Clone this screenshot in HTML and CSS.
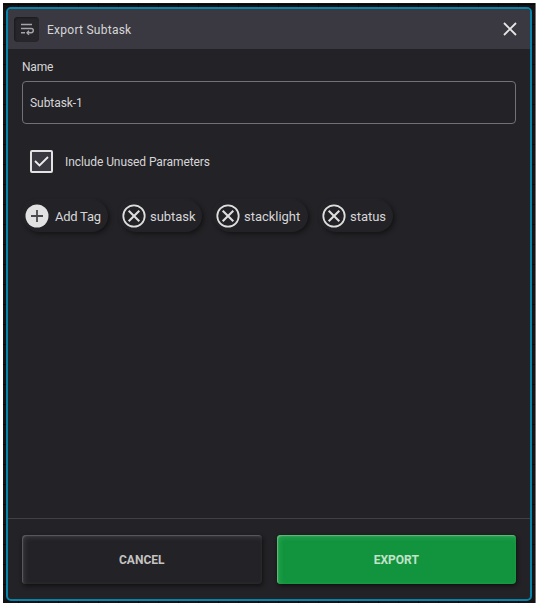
FILE: index.html
```html
<!DOCTYPE html>
<html lang="en">
<head>
<meta charset="utf-8">
<title>Export Subtask</title>
<link rel="stylesheet" href="styles.css">
</head>
<body>
<div class="backdrop">
  <section class="dialog">
    <header class="header">
      <span class="header-icon">
        <svg width="14" height="14" viewBox="0 0 14 14" fill="none" stroke="#a5a5a9" stroke-width="1.4"><path d="M1 2.5h11M1 6.5h10.2a2.1 2.1 0 0 1 0 4.2H7M1 10.7h4"/><path d="M9 8.7 7 10.7l2 2"/></svg>
      </span>
      <span class="title">Export Subtask</span>
      <svg class="close" width="14" height="14" viewBox="0 0 14 14" stroke="#e6e6e6" stroke-width="1.8"><path d="M1 1l12 12M13 1 1 13"/></svg>
    </header>
    <main class="content">
      <div class="label">Name</div>
      <div class="field"><span class="value">Subtask-1</span></div>
      <div class="check-row">
        <span class="checkbox"><svg width="15" height="11" viewBox="0 0 15 11" fill="none" stroke="#ededed" stroke-width="1.8"><path d="M1 5l4.5 4.5L14 1"/></svg></span>
        <span class="check-label">Include Unused Parameters</span>
      </div>
      <div class="tags">
        <span class="tag add"><svg width="24" height="24" viewBox="0 0 24 24"><circle cx="12" cy="12" r="11.5" fill="#e2e2e2"/><path d="M12 6v12M6 12h12" stroke="#4a4a4e" stroke-width="1.8"/></svg><span class="tag-text add-text">Add Tag</span></span>
        <span class="tag subtask"><svg width="24" height="24" viewBox="0 0 24 24" fill="none" stroke="#dedede"><circle cx="12" cy="12" r="10.7" stroke-width="1.8"/><path d="M6.7 6.7l10.6 10.6M17.3 6.7 6.7 17.3" stroke-width="2.1"/></svg><span class="tag-text">subtask</span></span>
        <span class="tag stacklight"><svg width="24" height="24" viewBox="0 0 24 24" fill="none" stroke="#dedede"><circle cx="12" cy="12" r="10.7" stroke-width="1.8"/><path d="M6.7 6.7l10.6 10.6M17.3 6.7 6.7 17.3" stroke-width="2.1"/></svg><span class="tag-text">stacklight</span></span>
        <span class="tag status"><svg width="24" height="24" viewBox="0 0 24 24" fill="none" stroke="#dedede"><circle cx="12" cy="12" r="10.7" stroke-width="1.8"/><path d="M6.7 6.7l10.6 10.6M17.3 6.7 6.7 17.3" stroke-width="2.1"/></svg><span class="tag-text">status</span></span>
      </div>
    </main>
    <footer class="footer">
      <div class="button cancel">CANCEL</div>
      <div class="button export">EXPORT</div>
    </footer>
  </section>
</div>
</body>
</html>
```
FILE: styles.css
```css
* { box-sizing: border-box; }
body {
  margin: 0;
  width: 538px;
  height: 606px;
  padding: 3px 2px 3px 3px;
  background: #fff;
  color: #d6d6d8;
  font: 12px/16px Roboto, sans-serif;
  overflow: hidden;
}
.backdrop {
  width: 533px;
  height: 600px;
  padding: 4px 3px 2px 3px;
  border-right: 1px solid #77777a;
  background-color: #131315;
  background-image: linear-gradient(90deg, #08080a 1px, transparent 1px), linear-gradient(#08080a 1px, transparent 1px);
  background-size: 20px 20px;
  background-position: 15px 1px;
}
.dialog {
  width: 526px;
  height: 594px;
  display: flex;
  flex-direction: column;
  border: 2px solid #0884ab;
  border-radius: 5px;
  background: #232226;
  overflow: hidden;
}
.header {
  height: 40px;
  flex: none;
  display: flex;
  align-items: center;
  padding: 0 13px 0 6px;
  background: #3a3941;
}
.header-icon {
  width: 25px;
  height: 25px;
  display: flex;
  align-items: center;
  justify-content: center;
  border-radius: 4px;
  background: #27262b;
  box-shadow: inset 1px 1px 2px #1a1a1d;
}
.title { margin: 2px 0 0 8px; font-size: 12px; letter-spacing: 0.26px; }
.close { margin-left: auto; }
.content { flex: 1; padding: 10px 14px 0; }
.label { height: 16px; font-size: 12px; letter-spacing: -0.2px; }
.field {
  height: 43px;
  margin-top: 6px;
  display: flex;
  align-items: center;
  padding-left: 7px;
  border: 1px solid #727176;
  border-radius: 4px;
}
.value { letter-spacing: -0.05px; }
.check-row { display: flex; align-items: center; height: 24px; margin: 25px 0 0 8px; }
.checkbox {
  width: 23px;
  height: 23px;
  display: flex;
  align-items: center;
  justify-content: center;
  border: 2px solid #e3e3e3;
  border-radius: 2px;
  background: #3a3941;
}
.check-label { margin: 1px 0 0 12px; letter-spacing: -0.08px; }
.tags { display: flex; gap: 12px; margin-top: 27px; padding-left: 1px; }
.tag {
  height: 32px;
  display: flex;
  align-items: center;
  padding-left: 2px;
  border-radius: 16px;
  background: #232226;
  box-shadow: 2px 2px 4px #141416, -1px -1px 2px #29282d;
  font-size: 13px;
  white-space: nowrap;
}
.tag-text { margin: 1px 0 0 4px; letter-spacing: -0.03px; }
.add-text { margin-left: 6px; letter-spacing: -0.25px; }
.add { width: 85px; }
.subtask { width: 82px; }
.stacklight { width: 94px; }
.status { width: 73px; }
.footer {
  height: 81px;
  flex: none;
  display: flex;
  gap: 15px;
  padding: 16px 14px 0;
  border-top: 1px solid #414044;
}
.button {
  flex: 1;
  height: 49px;
  display: flex;
  align-items: center;
  justify-content: center;
  border-radius: 4px;
  font-size: 12px;
  font-weight: 700;
}
.cancel { background: #232226; color: #c4c3c1; box-shadow: inset 1px 1px 1px #5b5a5e, inset 2px 2px 5px #3e3d42, 1px 2px 4px #111113; }
.export { background: #12943e; color: #c2e3ca; box-shadow: inset 1px 1px 1px #65b87e, inset 2px 2px 5px #2ea653, 1px 2px 4px #111113; }
```
